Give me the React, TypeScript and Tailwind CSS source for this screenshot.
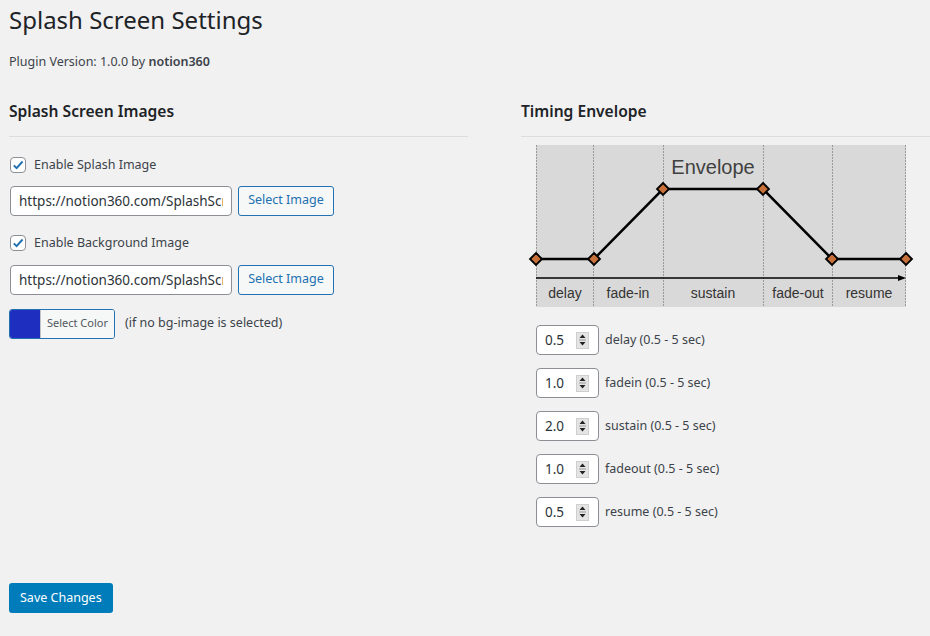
import React from "react";

const font = { fontFamily: '"Noto Sans", "Open Sans", sans-serif' };

function Checkbox() {
  return (
    <span className="flex h-4 w-4 items-center justify-center rounded-[4px] border border-[#8c8f94] bg-white">
      <svg width="14" height="14" viewBox="0 0 20 20">
        <path d="M4 10.5 L8 14.5 L16.5 5" fill="none" stroke="#2271b1" strokeWidth="2.8" />
      </svg>
    </span>
  );
}

function UrlRow({ value }: { value: string }) {
  return (
    <div className="flex items-center gap-[6px]">
      <input
        readOnly
        value={value}
        style={font}
        className="h-[30px] w-[222px] rounded-[4px] border border-[#8c8f94] bg-white px-2 text-[13.5px] text-[#2c3338] outline-none"
      />
      <button className="h-[30px] w-[96px] rounded-[3px] border border-[#2271b1] bg-[#f6f7f7] text-[12.5px] text-[#2271b1]">
        Select Image
      </button>
    </div>
  );
}

function Envelope() {
  const lines = [0.5, 57.5, 127.5, 227.5, 296.5, 369.5];
  const pts: [number, number][] = [
    [0, 114],
    [58, 114],
    [127, 44],
    [227, 44],
    [296, 114],
    [370, 114],
  ];
  const labels: [string, number][] = [
    ["delay", 29],
    ["fade-in", 92],
    ["sustain", 177],
    ["fade-out", 262],
    ["resume", 333],
  ];
  return (
    <svg width="386" height="162" viewBox="-8 0 386 162" className="block">
      <rect x="0" y="0" width="370" height="162" fill="#d9d9d9" />
      {lines.map((x) => (
        <line key={x} x1={x} y1="0" x2={x} y2="162" stroke="#9a9a9a" strokeWidth="1" strokeDasharray="2 1" />
      ))}
      <text x="177" y="29" textAnchor="middle" fontSize="20" fill="#404040" style={{ fontFamily: '"Liberation Sans", Arial, sans-serif' }}>
        Envelope
      </text>
      <polyline points={pts.map((p) => p.join(",")).join(" ")} fill="none" stroke="#000" strokeWidth="2.5" />
      <line x1="0" y1="133" x2="364" y2="133" stroke="#000" strokeWidth="1.5" />
      <path d="M370 133 L362 130 L362 136 Z" fill="#000" />
      {pts.map(([x, y], i) => (
        <path key={i} d={`M${x} ${y - 6} L${x + 6} ${y} L${x} ${y + 6} L${x - 6} ${y} Z`} fill="#c8703a" stroke="#000" strokeWidth="1.8" />
      ))}
      {labels.map(([t, x]) => (
        <text key={t} x={x} y="153" textAnchor="middle" fontSize="14" fill="#333" style={{ fontFamily: '"Liberation Sans", Arial, sans-serif' }}>
          {t}
        </text>
      ))}
    </svg>
  );
}

function Spin({ value, label }: { value: string; label: string }) {
  return (
    <div className="flex items-center gap-[6px]">
      <div className="flex h-[30px] w-[63px] items-center justify-between rounded-[4px] border border-[#8c8f94] bg-white pl-2 pr-[9px] text-[13.5px] text-[#2c3338]">
        <span>{value}</span>
        <span className="flex h-[17px] w-[13px] flex-col items-center justify-center border border-[#cfcfcf] bg-[#e4e4e4]">
          <svg width="9" height="14" viewBox="0 0 9 14">
            <path d="M4.5 1.5 L7.5 5 L1.5 5 Z" fill="#222" />
            <line x1="1" y1="7" x2="8" y2="7" stroke="#999" strokeWidth="1" />
            <path d="M4.5 12.5 L7.5 9 L1.5 9 Z" fill="#222" />
          </svg>
        </span>
      </div>
      <span className="text-[12.5px] text-[#3c434a]">{label}</span>
    </div>
  );
}

export default function App() {
  const timings = [
    { v: "0.5", l: "delay (0.5 - 5 sec)" },
    { v: "1.0", l: "fadein (0.5 - 5 sec)" },
    { v: "2.0", l: "sustain (0.5 - 5 sec)" },
    { v: "1.0", l: "fadeout (0.5 - 5 sec)" },
    { v: "0.5", l: "resume (0.5 - 5 sec)" },
  ];

  return (
    <div style={font} className="min-h-screen w-full bg-[#f1f1f1] pl-[9px] text-[#3c434a]">
      <h1 className="pt-[4px] text-[24px] font-normal leading-[32px] text-[#1d2327]">Splash Screen Settings</h1>
      <p className="mt-[16px] text-[12.5px] leading-[20px]">
        Plugin Version: 1.0.0 by <b className="font-semibold">notion360</b>
      </p>

      <div className="mt-[27px] flex">
        <div className="w-[459px]">
          <h2 className="text-[15.6px] font-semibold leading-[24px] text-[#1d2327]">Splash Screen Images</h2>
          <div className="mt-[13px] h-px bg-[#dcdcde]" />

          <div className="mt-[19px] flex items-center gap-[8px] pl-px text-[12.5px]">
            <Checkbox />
            <span>Enable Splash Image</span>
          </div>
          <div className="mt-[11px] pl-px">
            <UrlRow value="https://notion360.com/SplashScreen/images/splash.png" />
          </div>

          <div className="mt-[18px] flex items-center gap-[8px] pl-px text-[12.5px]">
            <Checkbox />
            <span>Enable Background Image</span>
          </div>
          <div className="mt-[12px] pl-px">
            <UrlRow value="https://notion360.com/SplashScreen/images/bg.png" />
          </div>

          <div className="mt-[14px] flex items-center gap-[10px]">
            <div className="flex h-[30px] w-[106px] overflow-hidden rounded-[3px] border border-[#2271b1]">
              <span className="w-[30px] bg-[#1e2fbf]" />
              <span className="flex flex-1 items-center justify-center border-l border-[#c3c4c7] bg-[#f6f7f7] text-[11px] text-[#50575e]">
                Select Color
              </span>
            </div>
            <span className="text-[12.5px]">(if no bg-image is selected)</span>
          </div>
        </div>

        <div className="ml-[53px] flex-1">
          <h2 className="text-[15.6px] font-semibold leading-[24px] text-[#1d2327]">Timing Envelope</h2>
          <div className="mt-[13px] h-px bg-[#dcdcde]" />
          <div className="mt-[8px] pl-[7px]">
            <Envelope />
          </div>
          <div className="mt-[18px] flex flex-col gap-[13px] pl-[15px]">
            {timings.map((t, i) => (
              <Spin key={i} value={t.v} label={t.l} />
            ))}
          </div>
        </div>
      </div>

      <button className="mt-[56px] h-[30px] rounded-[3px] bg-[#007cba] px-[11px] text-[12.5px] text-white">
        Save Changes
      </button>
    </div>
  );
}
